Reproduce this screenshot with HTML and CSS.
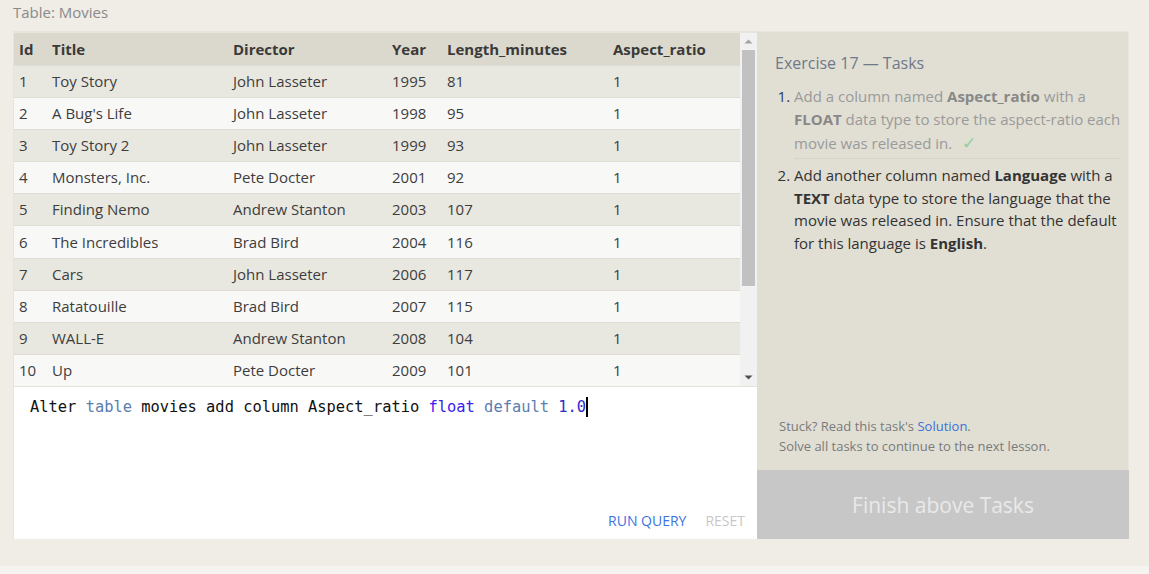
FILE: index.html
```html
<!DOCTYPE html>
<html>
<head>
<meta charset="utf-8">
<link rel="stylesheet" href="styles.css">
</head>
<body>
<div class="page">
  <div class="caption">Table: Movies</div>
  <div class="main">
    <div class="left">
      <div class="table-wrap">
        <table class="grid">
          <colgroup>
            <col class="c-id"><col class="c-title"><col class="c-dir"><col class="c-year"><col class="c-len"><col class="c-asp">
          </colgroup>
          <thead>
            <tr><th>Id</th><th>Title</th><th>Director</th><th>Year</th><th>Length_minutes</th><th>Aspect_ratio</th></tr>
          </thead>
          <tbody>
            <tr><td>1</td><td>Toy Story</td><td>John Lasseter</td><td>1995</td><td>81</td><td>1</td></tr>
            <tr><td>2</td><td>A Bug's Life</td><td>John Lasseter</td><td>1998</td><td>95</td><td>1</td></tr>
            <tr><td>3</td><td>Toy Story 2</td><td>John Lasseter</td><td>1999</td><td>93</td><td>1</td></tr>
            <tr><td>4</td><td>Monsters, Inc.</td><td>Pete Docter</td><td>2001</td><td>92</td><td>1</td></tr>
            <tr><td>5</td><td>Finding Nemo</td><td>Andrew Stanton</td><td>2003</td><td>107</td><td>1</td></tr>
            <tr><td>6</td><td>The Incredibles</td><td>Brad Bird</td><td>2004</td><td>116</td><td>1</td></tr>
            <tr><td>7</td><td>Cars</td><td>John Lasseter</td><td>2006</td><td>117</td><td>1</td></tr>
            <tr><td>8</td><td>Ratatouille</td><td>Brad Bird</td><td>2007</td><td>115</td><td>1</td></tr>
            <tr><td>9</td><td>WALL-E</td><td>Andrew Stanton</td><td>2008</td><td>104</td><td>1</td></tr>
            <tr><td>10</td><td>Up</td><td>Pete Docter</td><td>2009</td><td>101</td><td>1</td></tr>
          </tbody>
        </table>
        <div class="scrollbar">
          <svg class="arrow" width="17" height="17" viewBox="0 0 17 17"><path d="M4.5 10.5 L8.5 6.5 L12.5 10.5 Z" fill="#a3a3a3"/></svg>
          <div class="track"><div class="thumb"></div></div>
          <svg class="arrow" width="17" height="17" viewBox="0 0 17 17"><path d="M4.5 6.5 L8.5 10.5 L12.5 6.5 Z" fill="#505050"/></svg>
        </div>
      </div>
      <div class="editor">
        <div class="code"><span class="k">Alter</span> <span class="kw">table</span> movies add column Aspect_ratio <span class="ty">float</span> <span class="kw">default</span> <span class="num">1.0</span><span class="cursor"></span></div>
        <div class="actions">
          <span class="run">RUN QUERY</span>
          <span class="reset">RESET</span>
        </div>
      </div>
    </div>
    <div class="right">
      <div class="tasks">
        <div class="title">Exercise 17 — Tasks</div>
        <ol class="list">
          <li class="done">Add a column named <b>Aspect_ratio</b> with a <b>FLOAT</b> data type to store the aspect-ratio each movie was released in. <span class="check">✓</span></li>
          <li>Add another column named <b>Language</b> with a <b>TEXT</b> data type to store the language that the movie was released in. Ensure that the default for this language is <b>English</b>.</li>
        </ol>
        <div class="help">
          <div>Stuck? Read this task's <span class="link">Solution</span>.</div>
          <div>Solve all tasks to continue to the next lesson.</div>
        </div>
      </div>
      <div class="finish">Finish above Tasks</div>
    </div>
  </div>
  <div class="bottom-strip"></div>
</div>
</body>
</html>
```

FILE: styles.css
```css
html, body {
  margin: 0;
  padding: 0;
}
body {
  background: #efede6;
  font-family: "Open Sans", "Noto Sans", sans-serif;
  color: #333;
}
.page {
  width: 1149px;
  height: 574px;
  display: flex;
  flex-direction: column;
}
.caption {
  height: 31px;
  box-sizing: border-box;
  padding: 2px 0 0 13px;
  font-size: 15px;
  line-height: 20px;
  color: #8a8a8a;
}
.main {
  display: flex;
  padding-left: 13px;
  height: 508px;
}
.left {
  width: 744px;
  display: flex;
  flex-direction: column;
}
.table-wrap {
  display: flex;
  height: 355px;
  box-sizing: border-box;
  border-top: 2px solid #e6e4db;
  border-left: 1px solid #e6e4db;
}
.grid {
  width: 726px;
  border-collapse: collapse;
  table-layout: fixed;
  font-size: 15px;
}
.c-id { width: 33px; }
.c-title { width: 181px; }
.c-dir { width: 159px; }
.c-year { width: 55px; }
.c-len { width: 166px; }
.c-asp { width: 132px; }
.grid th {
  background: #dbd9cd;
  height: 32px;
  padding: 0 0 0 5px;
  text-align: left;
  font-weight: 700;
  color: #3a3a3a;
}
.grid td {
  height: 30px;
  padding: 0 0 1px 5px;
  border-top: 1px solid #dedcd4;
  color: #3d3d3d;
  white-space: nowrap;
}
.grid tbody tr:nth-child(odd) td { background: #e9e8e0; }
.grid tbody tr:nth-child(even) td { background: #f8f8f7; }
.scrollbar {
  width: 17px;
  background: #f1f1f1;
  display: flex;
  flex-direction: column;
}
.arrow { display: block; flex: none; }
.track {
  flex: 1;
  padding: 0 2px;
}
.thumb {
  height: 236px;
  background: #c1c1c1;
}
.editor {
  flex: 1;
  background: #fff;
  border-left: 1px solid #e6e4db;
  border-top: 1px solid #e3e1d8;
  display: flex;
  flex-direction: column;
}
.code {
  padding: 10px 0 0 16px;
  font-family: "DejaVu Sans Mono", "Liberation Mono", monospace;
  font-size: 15.4px;
  line-height: 20px;
  color: #111;
  flex: 1;
}
.code .kw { color: #5b7daf; }
.code .ty { color: #3a20f0; }
.code .num { color: #2c2ccf; }
.cursor {
  display: inline-block;
  width: 2px;
  height: 20px;
  background: #000;
  vertical-align: top;
}
.actions {
  display: flex;
  justify-content: flex-end;
  gap: 19px;
  padding: 0 12px 8px 0;
  font-size: 14px;
  line-height: 20px;
}
.run { color: #3b74e2; }
.reset { color: #c8c8c8; }
.right {
  width: 372px;
  display: flex;
  flex-direction: column;
}
.tasks {
  flex: 1;
  background: #e1dfd4;
  border-top: 1px solid #e8e6de;
  border-right: 1px solid #e8e6de;
  padding: 20px 7px 14px 18px;
  display: flex;
  flex-direction: column;
}
.title {
  font-size: 16px;
  line-height: 22px;
  color: #6f7888;
}
.list {
  margin: 8px 0 0 0;
  padding-left: 19px;
  font-size: 15px;
  line-height: 22.5px;
  color: #333;
}
.list li {
  padding: 3px 0 3px;
}
.list li.done {
  line-height: 23px;
}
.list li + li {
  border-top: 1px solid #d6d4ca;
  padding-top: 5px;
}
.list li.done {
  color: #9a9a9a;
}
.list li.done::marker {
  color: #2f3b58;
}
.list li.done b {
  color: #888;
}
.check {
  color: #8fd19c;
  margin-left: 6px;
  font-size: 17px;
}
.help {
  margin-top: auto;
  margin-left: 4px;
  font-size: 13px;
  line-height: 20px;
  color: #7a7a7a;
}
.link { color: #3b6fd9; }
.finish {
  height: 69px;
  background: #c7c7c7;
  color: #e9e9e9;
  font-size: 21px;
  display: flex;
  align-items: center;
  justify-content: center;
}
.bottom-strip {
  margin-top: auto;
  height: 8px;
  background: #f4f3ef;
}
```
